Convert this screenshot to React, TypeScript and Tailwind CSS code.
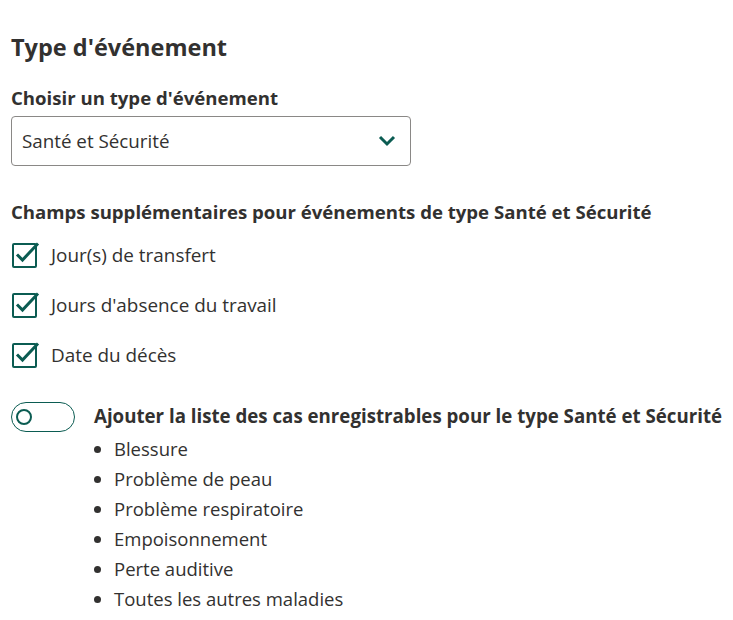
import React from "react";

const teal = "#0b5c52";

export default function App() {
  const items = [
    "Blessure",
    "Problème de peau",
    "Problème respiratoire",
    "Empoisonnement",
    "Perte auditive",
    "Toutes les autres maladies",
  ];
  return (
    <div className="px-[11px] pt-[30px] text-[#323130]" style={{ fontFamily: '"Open Sans", "Noto Sans", sans-serif' }}>
      <h1 className="text-[23.5px] font-bold leading-[34px]">Type d'événement</h1>
      <div className="mt-[22px] text-[18.6px] font-bold leading-[24px]">Choisir un type d'événement</div>
      <div className="mt-[6px] w-[400px] h-[50px] border border-[#8a8886] rounded-[4px] flex items-center justify-between pl-[10px] pr-[14px]">
        <span className="text-[18.8px]">Santé et Sécurité</span>
        <svg width="18" height="12" viewBox="0 0 18 12">
          <path d="M2 2 L9 9 L16 2" fill="none" stroke={teal} strokeWidth="3" />
        </svg>
      </div>
      <div className="mt-[34px] text-[18.6px] font-bold leading-[24px]">
        Champs supplémentaires pour événements de type Santé et Sécurité
      </div>
      <div className="mt-[6px] flex flex-col">
        {["Jour(s) de transfert", "Jours d'absence du travail", "Date du décès"].map((l) => (
          <div key={l} className="flex items-center h-[50px]">
            <div className="relative w-[25px] h-[25px] mr-[14px] ml-[1px]">
              <div className="absolute inset-0 border-[2.5px] border-[#0b5c52] rounded-[2px]" />
              <svg className="absolute left-0 top-0 overflow-visible" width="25" height="25" viewBox="0 0 25 25">
                <path d="M5 11.5 L10.5 17 L26 0.5" fill="none" stroke={teal} strokeWidth="3" />
              </svg>
            </div>
            <span className="text-[18.9px]">{l}</span>
          </div>
        ))}
      </div>
      <div className="mt-[22px] flex items-start">
        <div className="w-[64px] h-[30px] border border-[#0b5c52] rounded-full flex items-center pl-[4px] shrink-0">
          <div className="w-[16px] h-[16px] rounded-full border-[2.5px] border-[#0b5c52] bg-white" />
        </div>
        <div className="ml-[19px]">
          <div className="text-[18.7px] font-bold leading-[24px] mt-[2px] whitespace-nowrap">
            Ajouter la liste des cas enregistrables pour le type Santé et Sécurité
          </div>
          <ul className="mt-[6px] pl-[20px] list-disc">
            {items.map((i) => (
              <li key={i} className="text-[18.5px] leading-[30px]">{i}</li>
            ))}
          </ul>
        </div>
      </div>
    </div>
  );
}
